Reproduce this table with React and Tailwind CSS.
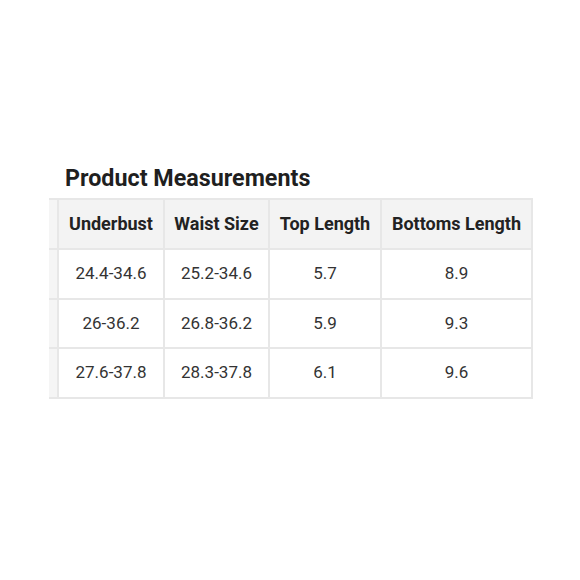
const rows = [
  ['24.4-34.6', '25.2-34.6', '5.7', '8.9'],
  ['26-36.2', '26.8-36.2', '5.9', '9.3'],
  ['27.6-37.8', '28.3-37.8', '6.1', '9.6'],
];

const headers = ['Underbust', 'Waist Size', 'Top Length', 'Bottoms Length'];
const widths = ['w-[106px]', 'w-[105px]', 'w-[112px]', 'w-[151px]'];

export default function App() {
  return (
    <div className="w-[580px] h-[580px] bg-white font-['Roboto',sans-serif]">
      <div className="pt-[164px]">
        <h2 className="pl-[65px] text-[23.3px] leading-[28px] font-bold text-[#1f1f1f]">
          Product Measurements
        </h2>
        <table className="ml-[49px] mt-[6px] border-collapse table-fixed">
          <thead>
            <tr className="h-[50px] bg-[#f3f3f3]">
              <th className="w-[9px] p-0 border-y-2 border-r-2 border-[#e7e7e7] bg-[#f5f5f5]"></th>
              {headers.map((h, i) => (
                <th
                  key={h}
                  className={`${widths[i]} p-0 pb-[2px] border-2 border-[#e7e7e7] text-[18px] font-bold text-[#222] text-center`}
                >
                  {h}
                </th>
              ))}
            </tr>
          </thead>
          <tbody>
            {rows.map((r, ri) => (
              <tr key={ri} className="h-[49.5px]">
                <td className="p-0 border-y-2 border-r-2 border-[#e7e7e7] bg-[#f5f5f5]"></td>
                {r.map((c, ci) => (
                  <td
                    key={ci}
                    className="p-0 border-2 border-[#e7e7e7] text-[17px] text-[#333] text-center"
                  >
                    {c}
                  </td>
                ))}
              </tr>
            ))}
          </tbody>
        </table>
      </div>
    </div>
  );
}
